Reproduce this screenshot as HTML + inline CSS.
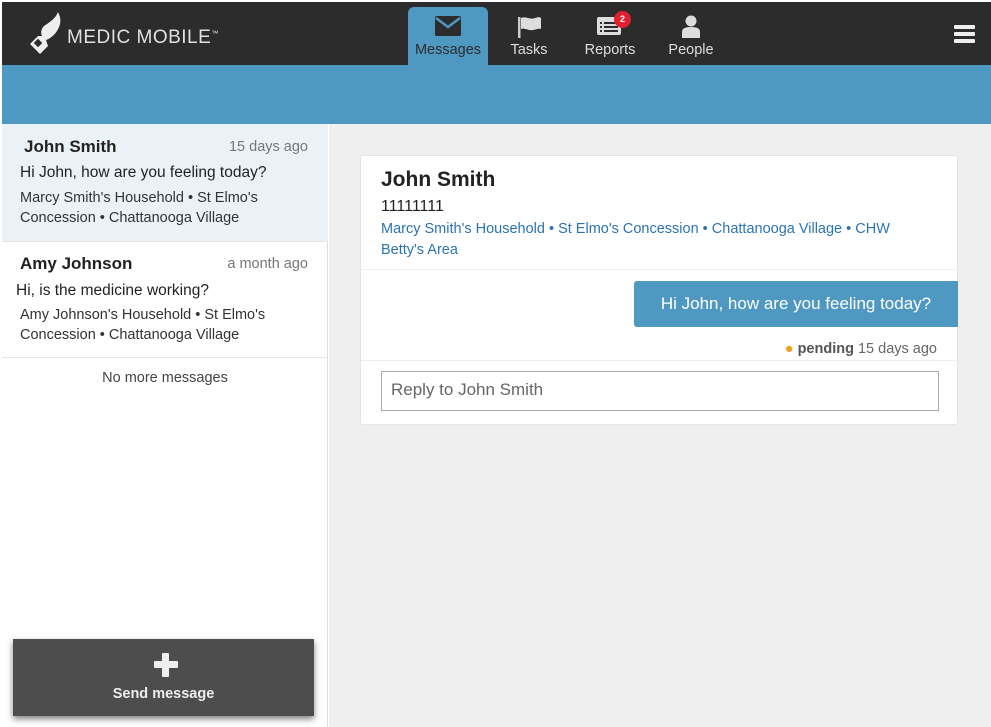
<!DOCTYPE html>
<html><head><meta charset="utf-8"><style>
*{box-sizing:border-box;margin:0;padding:0}
body{width:991px;height:727px;overflow:hidden;background:#fff;font-family:"Liberation Sans","DejaVu Sans",sans-serif;position:relative}
.hdr{position:absolute;left:2px;top:2px;width:989px;height:63px;background:#2c2c2c}
.band{position:absolute;left:2px;top:65px;width:989px;height:59px;background:#4f98c1}
.logo{position:absolute;left:28px;top:10px;color:#e0e0e0;font-size:19px;letter-spacing:0.5px}
.logo span{position:absolute;left:37px;top:15px;white-space:nowrap}
.tab{position:absolute;top:5px;width:80px;height:60px;text-align:center;color:#ddd;font-size:14.5px}
.tab .lbl{position:absolute;left:0;right:0;top:35px}
.tab.act{background:#4f98c1;border-radius:6px 6px 0 0;color:#2c2c2c}
.left{position:absolute;left:2px;top:124px;width:326px;height:603px;background:#fff;border-right:1px solid #ddd}
.right{position:absolute;left:329px;top:124px;width:662px;height:603px;background:#efefef}
.item{position:absolute;left:0;width:326px;border-bottom:1px solid #e6e6e6}
.nm{position:absolute;font-weight:bold;font-size:17px;color:#222}
.dt{position:absolute;right:20px;font-size:14.5px;color:#777}
.msg{position:absolute;font-size:15.5px;color:#222}
.loc{position:absolute;font-size:14.5px;color:#333;line-height:20px;width:280px}
.card{position:absolute;left:360px;top:155px;width:598px;height:270px;background:#fff;border:1px solid #e4e4e4;border-radius:3px}
.blue{color:#2a74b4}
</style></head><body>
<div class="hdr">
 <div class="logo">
  <svg width="36" height="46" viewBox="0 0 36 46" style="position:absolute;left:-2px;top:-2px"><path d="M30 2 C28 8 22 12 16 16 C14 18 12 22 14 26 L10 26 L2 34 L12 44 L20 36 L18 30 C24 28 30 22 32 14 C33 10 32 6 30 2Z" fill="#eee"/><rect x="7" y="30" width="6" height="6" fill="#2c2c2c" transform="rotate(45 10 33)"/></svg>
  <span>MEDIC MOBILE<sup style="font-size:7px">™</sup></span>
 </div>
 <div class="tab act" style="left:406px">
  <svg width="26" height="20" viewBox="0 0 26 20" style="position:absolute;left:27px;top:9px"><rect x="0" y="0" width="26" height="20" rx="2" fill="#2c2c2c"/><path d="M1 2 L13 11 L25 2" stroke="#4f98c1" stroke-width="2.5" fill="none"/></svg>
  <div class="lbl">Messages</div></div>
 <div class="tab" style="left:487px">
  <svg width="26" height="22" viewBox="0 0 26 22" style="position:absolute;left:28px;top:9px"><rect x="1" y="1" width="2.5" height="21" fill="#ccc"/><path d="M4 2 C9 0 13 4 18 2 C21 1 23 1 24 2 L24 13 C20 12 17 15 12 14 C9 13 6 12 4 13Z" fill="#ddd"/></svg>
  <div class="lbl">Tasks</div></div>
 <div class="tab" style="left:568px">
  <svg width="26" height="20" viewBox="0 0 26 20" style="position:absolute;left:27px;top:10px"><rect x="0" y="0" width="24" height="18" rx="2" fill="#ddd"/><g fill="#2c2c2c"><rect x="3" y="5" width="2" height="2"/><rect x="7" y="5" width="14" height="2"/><rect x="3" y="9" width="2" height="2"/><rect x="7" y="9" width="14" height="2"/><rect x="3" y="13" width="2" height="2"/><rect x="7" y="13" width="14" height="2"/></g></svg>
  <div style="position:absolute;left:44px;top:4px;width:17px;height:17px;border-radius:50%;background:#e0202e;color:#fff;font-size:9px;font-weight:bold;line-height:17px;text-align:center">2</div>
  <div class="lbl">Reports</div></div>
 <div class="tab" style="left:649px">
  <svg width="22" height="24" viewBox="0 0 22 24" style="position:absolute;left:29px;top:8px"><circle cx="11" cy="6" r="5.5" fill="#ddd"/><path d="M2 23 L2 17 C2 13 6 12 11 12 C16 12 20 13 20 17 L20 23Z" fill="#ddd"/></svg>
  <div class="lbl">People</div></div>
 <div style="position:absolute;left:952px;top:23px;width:21px"><div style="height:4px;background:#eee;margin-bottom:3px;border-radius:1px"></div><div style="height:4px;background:#eee;margin-bottom:3px;border-radius:1px"></div><div style="height:4px;background:#eee;border-radius:1px"></div></div>
</div>
<div class="band"></div>
<div class="left">
 <div class="item" style="top:0;height:118px;background:#eaf2f8">
  <div class="nm" style="left:22px;top:13px">John Smith</div><div class="dt" style="top:15px">15 days ago</div>
  <div class="msg" style="left:18px;top:40px">Hi John, how are you feeling today?</div>
  <div class="loc" style="left:18px;top:64px">Marcy Smith's Household • St Elmo's Concession • Chattanooga Village</div>
 </div>
 <div class="item" style="top:118px;height:116px">
  <div class="nm" style="left:18px;top:12px">Amy Johnson</div><div class="dt" style="top:14px">a month ago</div>
  <div class="msg" style="left:14px;top:40px">Hi, is the medicine working?</div>
  <div class="loc" style="left:18px;top:63px">Amy Johnson's Household • St Elmo's Concession • Chattanooga Village</div>
 </div>
 <div style="position:absolute;top:246px;left:0;width:326px;text-align:center;font-size:14.5px;color:#444">No more messages</div>
 <div style="position:absolute;left:11px;top:515px;width:301px;height:77px;background:#4d4d4d;box-shadow:0 3px 6px rgba(0,0,0,.5);color:#eee;text-align:center">
  <div style="position:absolute;left:141px;top:14px;width:24px;height:24px"><div style="position:absolute;left:8px;top:0;width:7px;height:24px;background:#eee;border-radius:1px"></div><div style="position:absolute;left:0;top:8px;width:24px;height:7px;background:#eee;border-radius:1px"></div></div>
  <div style="position:absolute;left:0;right:0;top:47px;font-weight:bold;font-size:14.5px">Send message</div>
 </div>
</div>
<div class="right"></div>
<div class="card">
 <div style="position:absolute;left:20px;top:12px;font-weight:bold;font-size:21px;color:#222">John Smith</div>
 <div style="position:absolute;left:20px;top:42px;font-size:16px;color:#222">11111111</div>
 <div class="blue" style="position:absolute;left:20px;top:63px;width:540px;font-size:14.5px;line-height:21px">Marcy Smith's Household • St Elmo's Concession • Chattanooga Village • CHW Betty's Area</div>
 <div style="position:absolute;left:0;top:113px;width:596px;border-top:1px solid #eee"></div>
 <div style="position:absolute;left:273px;top:125px;width:324px;height:46px;background:#4f98c1;border-radius:3px 0 0 3px;color:#fff;font-size:17px;line-height:46px;text-align:center">Hi John, how are you feeling today?</div>
 <div style="position:absolute;right:20px;top:185px;font-size:14.5px;color:#666"><span style="color:#f0a020">●</span> <b style="color:#555">pending</b> 15 days ago</div>
 <div style="position:absolute;left:0;top:204px;width:596px;border-top:1px solid #eee"></div>
 <div style="position:absolute;left:20px;top:215px;width:558px;height:40px;border:1px solid #aaa;font-size:17px;color:#666;padding:8px 9px">Reply to John Smith</div>
</div>
</body></html>
